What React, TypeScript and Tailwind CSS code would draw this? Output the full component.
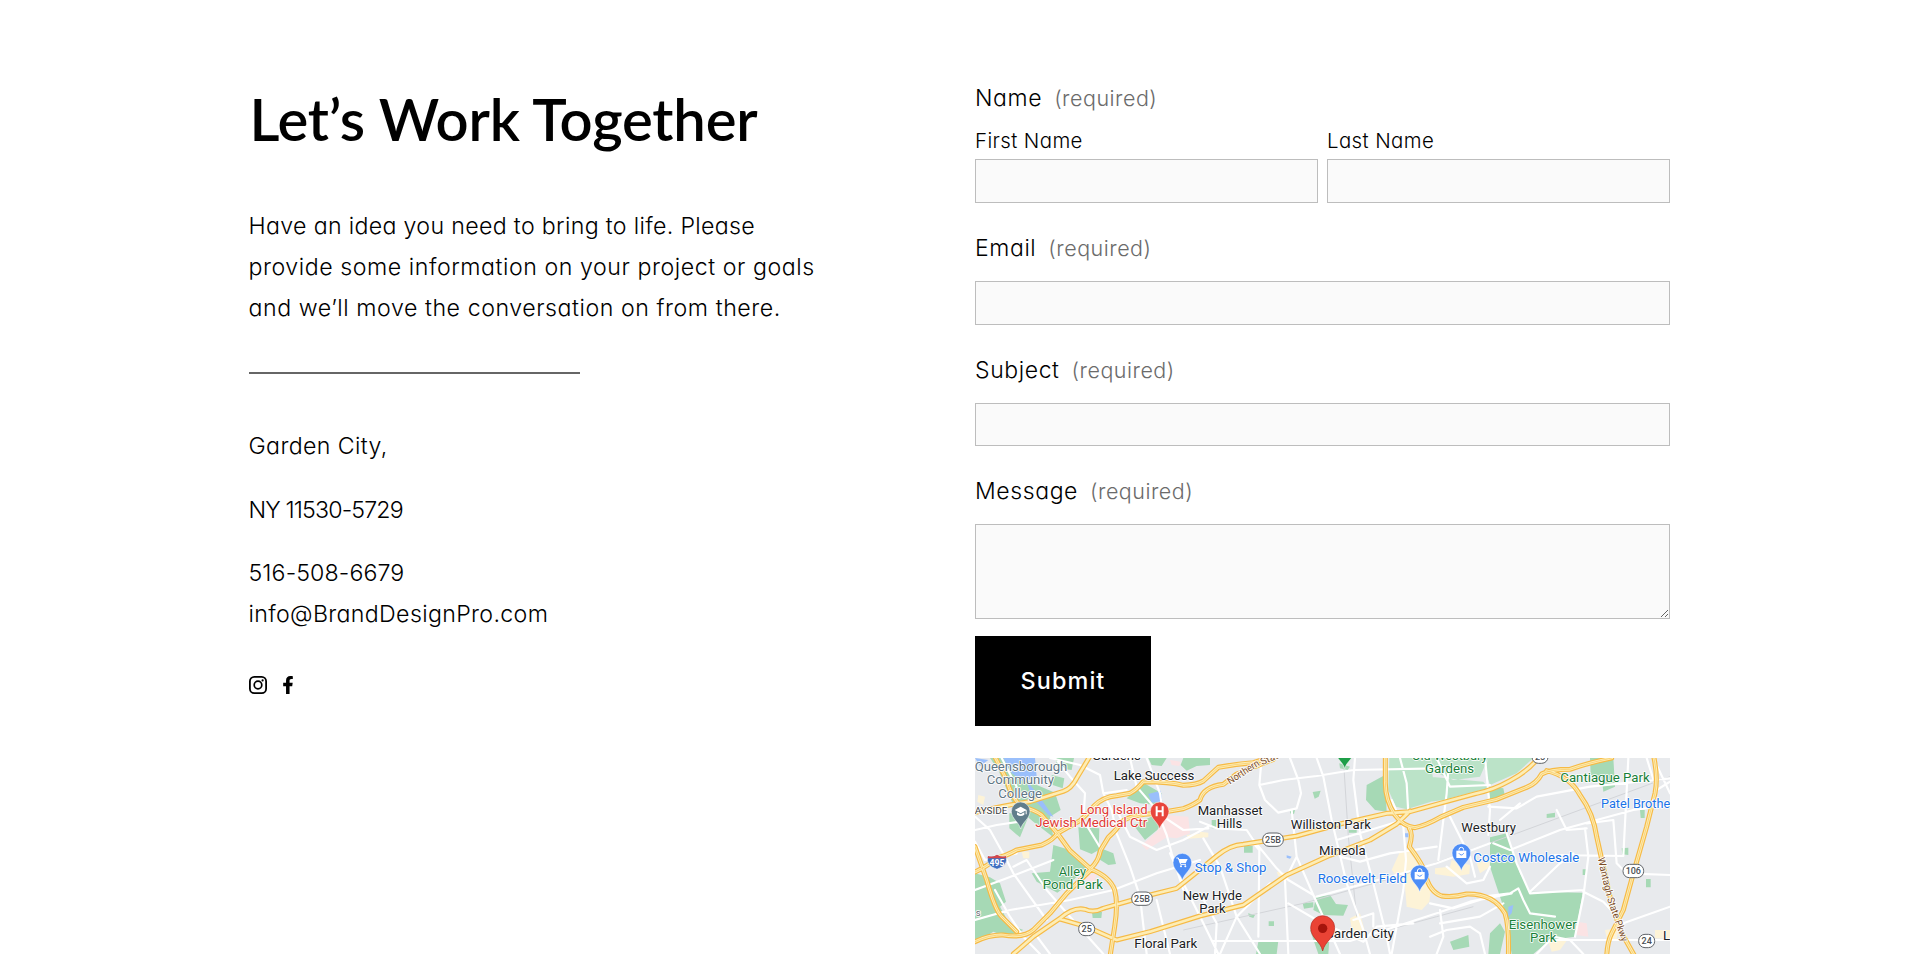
import { ReactNode } from "react";
import { FaFacebookF } from "react-icons/fa";

interface FieldProps {
  label: string;
  children: ReactNode;
}

interface MapLabelProps {
  x: number;
  y: number;
  width?: number;
  color?: string;
  size?: number;
  children: string;
}

const INPUT = "block w-full rounded-none border border-[#bdbdbd] bg-[#fafafa] outline-none";

// map shapes, drawn at three units per pixel
const parks = [
  "M60 24H118L178 95L255 128L272 180L240 200L250 262L190 215L130 165L85 60Z",
  "M118 190L180 188L150 262L118 235Z",
  "M255 24H312L305 60L265 55Z M245 75L283 85L278 115L248 105Z",
  "M325 232L388 235L386 300L365 312L330 298Z",
  "M250 285L300 300L350 352L300 400L262 428L200 395L185 370L240 365Z",
  "M385 292L430 310L438 342L415 345L378 322Z",
  "M15 370L60 382L90 400L108 455L90 470L120 525L160 540L110 560L70 545L15 580Z",
  "M470 145L520 98L575 130L560 165L510 160Z M490 225L555 195L580 225L525 270Z",
  "M535 24H590L575 48L545 45Z M640 24H720V45L680 48L650 62L632 45Z",
  "M366 486H396L394 504H368Z",
  "M1108 40L1140 50L1133 60L1110 55Z M1028 126L1052 122L1046 140L1034 146Z",
  "M1190 105L1245 75L1250 185L1215 180L1188 150Z",
  "M1860 24H1930L1935 110L1900 125L1895 80L1862 75Z",
  "M1560 262L1610 250L1650 370L1680 425L1838 428L1815 560L1740 570L1690 612H1625L1600 470L1560 350Z",
  "M1555 110L1600 115L1605 140L1560 148Z M1730 192L1755 188V202L1730 204Z",
  "M1038 440L1080 435L1098 462L1134 465L1120 497L1060 495L1030 480Z M998 460L1030 457V472L1002 476Z",
  "M865 575L925 572L920 612H858Z M1020 540H1080L1075 612H1045Z",
  "M822 288H848V308H822Z M834 490L855 495L850 504L838 500Z M896 514H912V528H896Z",
  "M960 178L975 180L972 192L960 190Z M1136 240H1160V248H1136Z M725 210H738V235H725Z",
  "M1440 575L1495 555L1498 590L1450 600Z M1560 550L1590 520L1605 545L1590 612H1555Z",
  "M1955 295L1975 293V315L1957 313Z M2028 387H2042V412H2028Z M1838 358H1850V375H1838Z M2010 180H2024V204H2012Z",
];

const lightParks = [
  "M1258 24H1385V60L1400 150L1310 178L1278 170L1255 120Z",
  "M1380 60L1450 90L1530 80L1555 24H1385Z M1380 80L1540 95L1555 115L1420 150L1380 155Z",
  "M1555 24H1690L1640 70L1560 105L1545 60Z",
];

const water = [
  "M100 24H195L200 80L160 95L125 70Z",
  "M168 90L205 135L250 200L235 195L185 140Z",
  "M535 132L572 122L577 155L545 158Z",
  "M15 24L55 30L30 48Z",
  "M600 236L612 242L606 250Z M950 316L965 320L960 326L950 323Z M1304 250H1315V262H1304Z M1615 470L1630 465L1625 490L1615 500Z",
];

const shops = [
  "M1290 305L1315 300L1345 345L1385 400L1378 455L1355 480L1310 470L1305 410L1265 360Z",
  "M1395 355L1440 350L1445 330L1500 345L1498 372L1450 380L1395 372Z",
  "M1140 505L1170 490L1185 545L1170 572L1150 565Z M690 245L715 248V260L690 264Z",
  "M1520 340L1560 330L1558 352L1530 370Z M650 255L715 248V262L655 266Z",
  "M1735 575L1795 565L1770 600L1745 605Z M1905 540L1945 535L1940 570L1910 565Z M2055 540H2100V565H2055Z",
  "M25 135L45 140L40 165L22 155Z M155 305H178V325H160Z M920 365L950 370L945 380L925 378Z",
];

const clinics = [
  "M585 195L655 200L660 250L620 265L590 262L530 300L515 285L560 245Z",
  "M1820 515L1850 520L1855 560L1820 555Z",
  "M345 375L380 372L372 395L350 392Z M600 30L632 35L628 48L605 45Z",
];

const streets = [
  "M15 240L80 225L150 215 M15 200L60 240L110 330L130 370L230 510 M15 420L110 385L250 330",
  "M15 510L120 480L300 450L430 420L560 370L690 330 M130 350L170 330L230 420L300 500L400 612",
  "M95 24L140 110 M240 24L330 45L390 75L400 130L425 180L440 250L480 350L510 440L530 612",
  "M255 24L300 80L345 130L340 210L395 300 M480 24L500 110L560 180L590 255L605 310L640 420",
  "M530 24L570 130L580 200L640 240L715 235 M440 180L480 260L560 300L640 270L715 230",
  "M600 310L640 400L700 520L745 612 M560 450L600 612 M160 560L210 612M190 545L240 612",
  "M15 275L45 330L140 310M75 420L120 500L160 560 M400 130L470 120",
  "M690 215L740 235L830 240L850 270L920 355L955 390L1030 435",
  "M700 265L750 350L800 500L870 612 M875 24L868 105L885 150L925 188L980 175L993 130L985 90L960 24",
  "M868 105L940 90L1040 78L1150 60L1400 55 M1040 24L1060 80L1085 210L1130 400L1180 540L1200 612",
  "M1155 24L1150 90L1170 250L1210 400L1250 560L1260 612 M965 180L980 320L1030 435L1110 612",
  "M980 320L945 390L955 612 M850 280L868 300L865 560 M955 460L1040 510L1180 575L1220 530L1330 520",
  "M730 573H1140L1230 545L1400 490L1500 455L1625 430 M1040 440L1150 410L1280 375L1400 340L1560 280",
  "M1110 320L1170 335L1260 310L1400 290 M1100 270L1300 210 M1290 24L1310 100L1315 190",
  "M1265 150L1300 230L1308 330L1300 420L1265 612 M1150 510L1210 490L1210 530",
  "M1400 24L1440 110L1560 105 M1435 60L1430 130L1405 330 M1545 24L1560 180L1555 255",
  "M1555 170L1640 175L1700 140L1860 110L2100 85 M1570 280L1620 300L1770 240L1880 210L1990 180L2100 165",
  "M1610 250L1640 340L1680 430L1840 420 M1650 160L1590 210 M1680 425L1770 340L1810 310",
  "M1845 235L1855 320L1840 440L1815 560 M1755 315L1960 318L1975 24 M1850 220L1930 210L1940 340L1970 370L2100 375",
  "M1540 440L1620 430L1645 415L1660 450L1680 490L1755 500 M1840 425L1900 455L1960 520L2100 470",
  "M1380 460L1450 475L1560 440 M1410 520L1530 500L1600 460 M1430 350L1490 400L1540 390L1560 350",
  "M1380 560L1430 540L1500 530L1530 550L1545 612 M1740 570H2100 M2050 24L2100 130 M1410 480L1420 560L1400 612",
  "M1700 612L1750 560L1800 570L1840 612 M1760 180L1790 240L1850 235 M1440 200L1500 320L1515 380",
  "M900 400L800 500L750 612 M690 430L740 520L735 612 M2030 24L2060 120L2100 95",
];

const highways = [
  "M15 188Q90 168 180 155L280 124Q305 115 320 85L362 15",
  "M15 366Q60 345 75 325Q110 318 140 300L215 285Q250 270 262 250L330 212Q350 195 372 168Q400 140 440 137L480 130Q500 120 520 95Q600 95 640 106Q680 105 700 93L745 52Q800 42 850 38L905 20",
  "M362 355Q385 335 392 300L415 262Q440 240 455 215Q480 195 560 190L640 176Q670 165 690 150Q700 110 760 103L800 72L910 28",
  "M72 15L110 90Q125 145 155 170Q195 180 215 195L262 250L300 302L362 357Q420 380 434 420Q445 460 434 530L420 620",
  "M15 290L50 390Q75 480 95 500L140 545",
  "M15 575Q60 553 100 555Q160 565 190 540L240 490L290 430L362 360",
  "M130 612L190 560L270 505Q310 470 345 478Q370 490 400 475L540 435L620 415L670 375L740 318Q780 285 820 283L980 258L1110 222L1250 190L1320 185L1410 160L1520 130Q1570 120 1620 92Q1670 65 1700 30",
  "M270 507L350 530L440 570L540 545L690 498L820 465L950 375L1080 316L1200 270L1280 222L1320 183",
  "M1246 15V95Q1245 150 1275 195Q1300 230 1335 233Q1370 225 1410 202L1480 172L1580 148L1670 112Q1700 100 1715 72Q1740 58 1800 58Q1850 40 1925 24",
  "M1318 235Q1330 250 1318 290Q1360 345 1365 370Q1378 425 1415 438Q1450 443 1490 432Q1570 430 1605 490Q1618 530 1615 620",
  "M1730 62Q1800 80 1830 135Q1870 190 1880 260L1920 440L1950 540L1995 620",
  "M2050 15Q2065 80 2055 130L2030 230L1990 370L1960 480L1925 550Q1912 575 1910 620",
];

function FieldLabel({ children }: { children: string }) {
  return (
    <span className="flex h-8 items-center gap-3 pt-[1px] whitespace-nowrap">
      <span className="text-[23px] font-[350] tracking-[0.6px]">{children}</span>
      <span className="text-[21.5px] font-light tracking-[0.5px] text-[#6b6b6b]">(required)</span>
    </span>
  );
}

function Field({ label, children }: FieldProps) {
  return (
    <label className="flex flex-col gap-[17px]">
      <FieldLabel>{label}</FieldLabel>
      {children}
    </label>
  );
}

function MapLabel({ x, y, width, color = "#202124", size = 40, children }: MapLabelProps) {
  return (
    <text
      x={x}
      y={y}
      fontSize={size}
      fill={color}
      stroke="#fff"
      strokeWidth={5}
      strokeLinejoin="round"
      paintOrder="stroke"
      textLength={width}
      lengthAdjust="spacingAndGlyphs"
    >
      {children}
    </text>
  );
}

function Pin({ x, y, color, children }: { x: number; y: number; color: string; children?: ReactNode }) {
  return (
    <g transform={`translate(${x} ${y})`}>
      <path
        d="M0 53C-5 32 -28 22 -28 0A28 28 0 0 1 28 0C28 22 5 32 0 53Z"
        fill={color}
        stroke="#fff"
        strokeWidth={1.5}
      />
      {children}
    </g>
  );
}

function RouteShield({ x, y, text }: { x: number; y: number; text: string }) {
  const half = text.length > 2 ? 31 : 24;
  return (
    <g>
      <rect x={x - half} y={y - 20} width={half * 2} height={40} rx={19} fill="#fff" stroke="#5f6368" strokeWidth={3} />
      <text x={x} y={y + 10} fontSize={27} fontWeight={500} fill="#4b4f54" textAnchor="middle">
        {text}
      </text>
    </g>
  );
}

function AreaMap() {
  return (
    <svg
      viewBox="15 24 2085 588"
      className="block h-[196px] w-full overflow-hidden bg-[#e8eaed] font-[Roboto,sans-serif]"
      role="img"
      aria-label="Garden City"
    >
      <path d={lightParks.join(" ")} fill="#bbe3c8" />
      <path d={parks.join(" ")} fill="#a6d9b5" />
      <path d={water.join(" ")} fill="#9abffb" />
      <path d={shops.join(" ")} fill="#fdf3d7" />
      <path d={clinics.join(" ")} fill="#fbe3e4" />
      <path
        d="M640 540L1000 460L1300 375L1420 330L1640 250L2100 80 M1120 24L1135 260L1160 500 M1180 560L1400 500L1510 470"
        fill="none"
        stroke="#d3d5d9"
        strokeWidth={3}
      />
      <g fill="none" strokeLinejoin="round" strokeLinecap="round">
        <path d={streets.join(" ")} stroke="#fff" strokeWidth={6.5} />
        <path d={highways.join(" ")} stroke="#f6ba45" strokeWidth={15} />
        <path d={highways.join(" ")} stroke="#fdedb5" strokeWidth={8} />
        <path d={highways.slice(1, 6).join(" ")} stroke="#f8c75f" strokeWidth={2} />
        <path d={highways.slice(8).join(" ")} stroke="#f8c75f" strokeWidth={2} />
      </g>

      <MapLabel x={14} y={63} width={278} color="#5f7684">Queensborough</MapLabel>
      <MapLabel x={50} y={103} width={202} color="#5f7684">Community</MapLabel>
      <MapLabel x={85} y={143} width={131} color="#5f7684">College</MapLabel>
      <MapLabel x={14} y={191} width={98} size={25} color="#3c4043">AYSIDE</MapLabel>
      <MapLabel x={366} y={31} width={146}>Gardens</MapLabel>
      <MapLabel x={431} y={91} width={242}>Lake Success</MapLabel>
      <MapLabel x={330} y={191} width={203} color="#e03a34">Long Island</MapLabel>
      <MapLabel x={196} y={231} width={336} color="#e03a34">Jewish Medical Ctr</MapLabel>
      <MapLabel x={266} y={379} width={82} color="#188038">Alley</MapLabel>
      <MapLabel x={218} y={418} width={181} color="#188038">Pond Park</MapLabel>
      <MapLabel x={683} y={194} width={195}>Manhasset</MapLabel>
      <MapLabel x={740} y={233} width={77}>Hills</MapLabel>
      <MapLabel x={962} y={236} width={241}>Williston Park</MapLabel>
      <MapLabel x={1047} y={316} width={140}>Mineola</MapLabel>
      <MapLabel x={674} y={365} width={215} color="#1a73e8">Stop &amp; Shop</MapLabel>
      <MapLabel x={1043} y={400} width={268} color="#1a73e8">Roosevelt Field</MapLabel>
      <MapLabel x={638} y={450} width={178}>New Hyde</MapLabel>
      <MapLabel x={688} y={490} width={79}>Park</MapLabel>
      <MapLabel x={493} y={595} width={189}>Floral Park</MapLabel>
      <MapLabel x={1064} y={563} width={208}>Garden City</MapLabel>
      <MapLabel x={1325} y={30} width={228} color="#188038">Old Westbury</MapLabel>
      <MapLabel x={1365} y={68} width={147} color="#188038">Gardens</MapLabel>
      <MapLabel x={1771} y={95} width={268} color="#188038">Cantiague Park</MapLabel>
      <MapLabel x={1893} y={173} width={240} color="#1a73e8">Patel Brothers</MapLabel>
      <MapLabel x={1474} y={246} width={164}>Westbury</MapLabel>
      <MapLabel x={1510} y={337} width={318} color="#1a73e8">Costco Wholesale</MapLabel>
      <MapLabel x={1616} y={536} width={204} color="#188038">Eisenhower</MapLabel>
      <MapLabel x={1680} y={576} width={79} color="#188038">Park</MapLabel>
      <MapLabel x={2079} y={571}>L</MapLabel>
      <MapLabel x={17} y={497} size={28} color="#5f6368">s</MapLabel>
      <g transform="translate(780 104) rotate(-33)">
        <MapLabel x={0} y={0} size={30} width={108} color="#7a4b26">Northern</MapLabel>
      </g>
      <g transform="translate(877 46) rotate(-24)">
        <MapLabel x={0} y={0} size={30} color="#7a4b26">State Pkwy</MapLabel>
      </g>
      <g transform="translate(1883 325) rotate(77)">
        <MapLabel x={0} y={0} size={30} width={117} color="#7a4b26">Wantagh</MapLabel>
      </g>
      <g transform="translate(1911 446) rotate(71)">
        <MapLabel x={0} y={0} size={30} width={138} color="#7a4b26">State Pkwy</MapLabel>
      </g>

      <RouteShield x={516} y={446} text="25B" />
      <RouteShield x={909} y={269} text="25B" />
      <RouteShield x={350} y={537} text="25" />
      <RouteShield x={1710} y={20} text="25" />
      <RouteShield x={1990} y={363} text="106" />
      <RouteShield x={2030} y={573} text="24" />

      {/* interstate shield */}
      <path d="M54 318Q68 323 81 314Q94 323 108 318Q118 346 81 358Q44 346 54 318Z" fill="#3f6fc0" stroke="#fff" strokeWidth={2} />
      <path d="M54 318Q68 323 81 314Q94 323 108 318L109 325H53Z" fill="#d5474b" />
      <text x={81} y={348} fontSize={26} fontWeight={700} fill="#fff" textAnchor="middle">495</text>

      <Pin x={152} y={184} color="#607d8b">
        <path d="M-18 -4L0 -14L18 -4L0 6Z M-11 3V10Q0 18 11 10V3L0 9Z M15 -3H18V9H15Z" fill="#fff" />
      </Pin>
      <Pin x={569} y={184} color="#e8453c">
        <path d="M-12 -15H-6V-3H6V-15H12V15H6V3H-6V15H-12Z" fill="#fff" />
      </Pin>
      <Pin x={637} y={338} color="#4d8df6">
        <path d="M-18 -14H-12L-5 5H11" fill="none" stroke="#fff" strokeWidth={3} />
        <path d="M-11 -11H16L10 1H-7Z" fill="#fff" />
        <circle cx={-4} cy={11} r={3} fill="#fff" />
        <circle cx={9} cy={11} r={3} fill="#fff" />
      </Pin>
      {[[1349, 373], [1474, 309]].map(([x, y]) => (
        <Pin key={x} x={x} y={y} color="#4d8df6">
          <path d="M-15 -7H15V15H-15Z" fill="#fff" />
          <path d="M-7 -7V-10A7 7 0 0 1 7 -10V-7" fill="none" stroke="#fff" strokeWidth={3} />
          <path d="M-7 1Q0 11 7 1" fill="none" stroke="#4d8df6" strokeWidth={3} />
        </Pin>
      ))}
      <Pin x={1124} y={3} color="#1e9e48" />
      <path d="M1058 603C1052 574 1022 564 1022 533A36 36 0 0 1 1094 533C1094 564 1064 574 1058 603Z" fill="#ea4335" stroke="#b8281f" strokeWidth={2} />
      <circle cx={1058} cy={535} r={14} fill="#a5140c" />
    </svg>
  );
}

export default function App() {
  return (
    <main className="flex h-[954px] overflow-hidden bg-white pl-[248.5px] font-[Inter,sans-serif] text-black [font-feature-settings:'cv11']">
      <section className="w-[726.5px] shrink-0 pt-[84px] text-[23.2px] leading-[41px] font-light whitespace-nowrap">
        <h1 className="pl-[1px] font-[Lato,sans-serif] text-[58px] leading-[70px] font-semibold tracking-[-0.2px]">
          Let’s Work Together
        </h1>
        <p className="mt-[52px] tracking-[0.54px]">
          <span className="tracking-[0.32px]">Have an idea you need to bring to life. Please</span>
          <br />
          provide some information on your project or goals
          <br />
          and we’ll move the conversation on from there.
        </p>
        <hr className="mt-[43px] h-[2px] w-[331px] border-0 bg-[#666]" />
        <p className="mt-[52px] tracking-[0.35px]">Garden City,</p>
        <p className="mt-[23px] tracking-[-0.85px]">NY 11530-5729</p>
        <p className="mt-[22px]">
          <span className="tracking-[0.1px]">516-508-6679</span>
          <br />
          <span className="tracking-[0.33px]">info@BrandDesignPro.com</span>
        </p>
        <div className="mt-[41px] flex items-center gap-[15px]">
          <svg viewBox="0 0 18 18" className="size-[18px]" fill="none" stroke="#000">
            <rect x="0.9" y="0.9" width="16.2" height="16.2" rx="4.4" strokeWidth="1.8" />
            <circle cx="9" cy="9" r="3.8" strokeWidth="1.7" />
            <circle cx="13.6" cy="4.4" r="1.1" fill="#000" stroke="none" />
          </svg>
          <FaFacebookF className="h-[18px] w-[12px]" />
        </div>
      </section>

      <section className="w-[695px] shrink-0 pt-[82px]">
        <form>
          <fieldset>
            <legend>
              <FieldLabel>Name</FieldLabel>
            </legend>
            <div className="mt-3 grid grid-cols-2 gap-[9px] text-[20.4px] leading-[30px] font-light tracking-[0.4px]">
              <label>
                First Name
                <input className={`${INPUT} mt-[3px] h-[44px]`} />
              </label>
              <label>
                Last Name
                <input className={`${INPUT} mt-[3px] h-[44px]`} />
              </label>
            </div>
          </fieldset>
          <div className="mt-[29px] flex flex-col gap-[29px]">
            <Field label="Email">
              <input className={`${INPUT} h-[44px]`} />
            </Field>
            <Field label="Subject">
              <input className={`${INPUT} h-[43px]`} />
            </Field>
            <Field label="Message">
              <textarea className={`${INPUT} h-[95px] resize-y`} />
            </Field>
          </div>
          <button
            type="button"
            className="mt-[17px] block h-[90px] w-[176px] bg-black text-[23.4px] font-medium tracking-[1.1px] text-white"
          >
            Submit
          </button>
        </form>
        <div className="mt-8">
          <AreaMap />
        </div>
      </section>
    </main>
  );
}
